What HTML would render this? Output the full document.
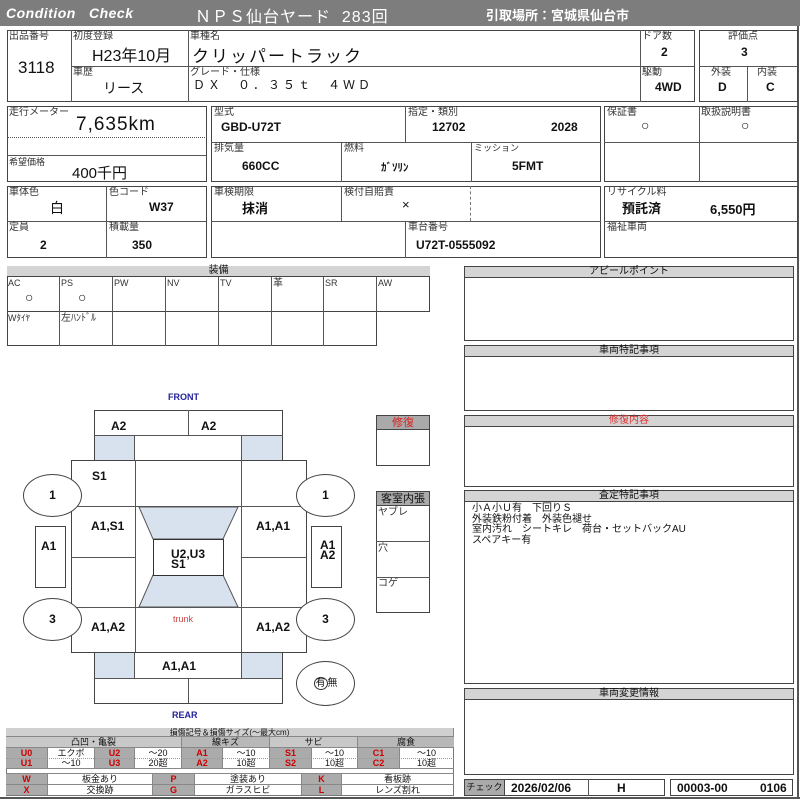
<!DOCTYPE html>
<html><head><meta charset="utf-8"><style>
*{margin:0;padding:0;box-sizing:border-box}
body{width:800px;height:800px;background:#fff;position:relative;overflow:hidden;font-family:"Liberation Sans","Noto Sans CJK JP",sans-serif;color:#111}
div{position:absolute}
.b{border:1px solid #444}
.hl{height:1px;background:#555}
.vl{width:1px;background:#555}
.lb{font-size:10px;color:#333;line-height:11px;white-space:nowrap}
.v{font-size:12px;font-weight:bold;white-space:nowrap;font-family:"Liberation Sans Narrow","Liberation Sans","Noto Sans CJK JP",sans-serif}
.c{text-align:center}
.hd{background:#d4d4d4;border-bottom:1px solid #444;text-align:center;font-size:10px;line-height:10px;height:11px}
.bl{background:#d8e2ee}
.ov{border:1px solid #444;border-radius:50%;background:#fff;text-align:center;font-size:12px;font-weight:bold}
.g{background:#ababab;color:#c00;font-weight:bold;text-align:center}
.lg div{font-size:9px;line-height:10px;text-align:center;border-right:1px solid #888}
</style></head><body>
<!-- header -->
<div style="left:0;top:0;width:800px;height:26px;background:#7d7d7d"></div>
<div style="left:6px;top:5px;color:#fff;font-size:14px;font-style:italic;font-weight:bold;font-family:'Liberation Sans',sans-serif;letter-spacing:0.5px">Condition&nbsp;&nbsp; Check</div>
<div style="left:195px;top:3px;color:#fff;font-size:16px;letter-spacing:1px">ＮＰＳ仙台ヤード&nbsp; 283回</div>
<div style="left:486px;top:5px;color:#fff;font-size:13px;font-weight:bold">引取場所：宮城県仙台市</div>
<div style="left:797px;top:26px;width:2px;height:772px;background:#555"></div>
<div style="left:0;top:797px;width:800px;height:2px;background:#555"></div>

<!-- block1 -->
<div class="b" style="left:7px;top:30px;width:688px;height:72px"></div>
<div class="vl" style="left:71px;top:30px;height:72px"></div>
<div class="vl" style="left:188px;top:30px;height:72px"></div>
<div class="vl" style="left:640px;top:30px;height:72px"></div>
<div class="hl" style="left:71px;top:66px;width:624px"></div>
<div class="lb" style="left:9px;top:31px">出品番号</div>
<div style="left:18px;top:58px;font-size:17px">3118</div>
<div class="lb" style="left:73px;top:31px">初度登録</div>
<div style="left:92px;top:42px;font-size:16px">H23年10月</div>
<div class="lb" style="left:73px;top:67px">車歴</div>
<div style="left:103px;top:78px;font-size:14px">リース</div>
<div class="lb" style="left:190px;top:31px">車種名</div>
<div style="left:192px;top:42px;font-size:17px;letter-spacing:2px">クリッパートラック</div>
<div class="lb" style="left:190px;top:67px">グレード・仕様</div>
<div style="left:193px;top:76px;font-size:12px;letter-spacing:3px">ＤＸ　０．３５ｔ　４ＷＤ</div>
<div class="lb" style="left:642px;top:31px">ドア数</div>
<div class="v" style="left:661px;top:45px">2</div>
<div class="lb" style="left:642px;top:67px">駆動</div>
<div class="v" style="left:655px;top:80px">4WD</div>
<div class="b" style="left:699px;top:30px;width:99px;height:72px"></div>
<div class="hl" style="left:699px;top:66px;width:99px"></div>
<div class="vl" style="left:747px;top:66px;height:36px"></div>
<div class="lb" style="left:728px;top:31px">評価点</div>
<div class="v" style="left:741px;top:45px">3</div>
<div class="lb" style="left:711px;top:67px">外装</div>
<div class="v" style="left:718px;top:80px">D</div>
<div class="lb" style="left:757px;top:67px">内装</div>
<div class="v" style="left:766px;top:80px">C</div>

<!-- block2 -->
<div class="b" style="left:7px;top:106px;width:200px;height:76px"></div>
<div style="left:7px;top:137px;width:200px;border-top:1px dotted #555"></div>
<div class="hl" style="left:7px;top:155px;width:200px"></div>
<div class="lb" style="left:9px;top:107px">走行メーター</div>
<div style="left:76px;top:114px;font-size:19px;letter-spacing:1px">7,635km</div>
<div class="lb" style="left:9px;top:157px;font-size:9px">希望価格</div>
<div style="left:72px;top:162px;font-size:15px">400千円</div>
<div class="b" style="left:211px;top:106px;width:390px;height:76px"></div>
<div class="vl" style="left:405px;top:106px;height:36px"></div>
<div class="hl" style="left:211px;top:142px;width:390px"></div>
<div class="vl" style="left:341px;top:142px;height:40px"></div>
<div class="vl" style="left:471px;top:142px;height:40px"></div>
<div class="lb" style="left:214px;top:107px">型式</div>
<div class="v" style="left:221px;top:120px">GBD-U72T</div>
<div class="lb" style="left:408px;top:107px">指定・類別</div>
<div class="v" style="left:432px;top:120px">12702</div>
<div class="v" style="left:551px;top:120px">2028</div>
<div class="lb" style="left:214px;top:143px">排気量</div>
<div class="v" style="left:242px;top:159px">660CC</div>
<div class="lb" style="left:344px;top:143px">燃料</div>
<div class="v" style="left:381px;top:159px;font-size:11px">ｶﾞｿﾘﾝ</div>
<div class="lb" style="left:474px;top:143px;font-size:9px">ミッション</div>
<div class="v" style="left:512px;top:159px">5FMT</div>
<div class="b" style="left:604px;top:106px;width:194px;height:76px"></div>
<div class="vl" style="left:699px;top:106px;height:76px"></div>
<div class="hl" style="left:604px;top:142px;width:194px"></div>
<div class="lb" style="left:607px;top:107px">保証書</div>
<div style="left:641px;top:117px;font-size:14px">○</div>
<div class="lb" style="left:701px;top:107px">取扱説明書</div>
<div style="left:741px;top:117px;font-size:14px">○</div>

<!-- block3 -->
<div class="b" style="left:7px;top:186px;width:200px;height:72px"></div>
<div class="hl" style="left:7px;top:221px;width:200px"></div>
<div class="vl" style="left:106px;top:186px;height:72px"></div>
<div class="lb" style="left:9px;top:187px">車体色</div>
<div style="left:50px;top:198px;font-size:14px">白</div>
<div class="lb" style="left:109px;top:187px">色コード</div>
<div class="v" style="left:149px;top:200px">W37</div>
<div class="lb" style="left:9px;top:222px">定員</div>
<div class="v" style="left:40px;top:238px">2</div>
<div class="lb" style="left:109px;top:222px">積載量</div>
<div class="v" style="left:132px;top:238px">350</div>
<div class="b" style="left:211px;top:186px;width:390px;height:72px"></div>
<div class="hl" style="left:211px;top:221px;width:390px"></div>
<div class="vl" style="left:341px;top:186px;height:35px"></div>
<div style="left:470px;top:186px;height:35px;border-left:1px dashed #777"></div>
<div class="vl" style="left:405px;top:221px;height:37px"></div>
<div class="lb" style="left:214px;top:187px">車検期限</div>
<div style="left:242px;top:198px;font-size:13px;font-weight:bold">抹消</div>
<div class="lb" style="left:344px;top:187px">検付自賠責</div>
<div style="left:402px;top:197px;font-size:13px">×</div>
<div class="lb" style="left:408px;top:222px">車台番号</div>
<div class="v" style="left:416px;top:238px">U72T-0555092</div>
<div class="b" style="left:604px;top:186px;width:194px;height:72px"></div>
<div class="hl" style="left:604px;top:221px;width:194px"></div>
<div class="lb" style="left:607px;top:187px">リサイクル料</div>
<div style="left:622px;top:198px;font-size:13px;font-weight:bold">預託済</div>
<div class="v" style="left:710px;top:199px;font-size:13px">6,550円</div>
<div class="lb" style="left:607px;top:222px">福祉車両</div>

<!-- 装備 -->
<div class="b" style="left:7px;top:266px;width:423px;height:46px"></div>
<div class="hd" style="left:7px;top:266px;width:423px">装備</div>
<div class="b" style="left:7px;top:311px;width:370px;height:35px"></div>
<div class="vl" style="left:59px;top:277px;height:69px"></div>
<div class="vl" style="left:112px;top:277px;height:69px"></div>
<div class="vl" style="left:165px;top:277px;height:69px"></div>
<div class="vl" style="left:218px;top:277px;height:69px"></div>
<div class="vl" style="left:271px;top:277px;height:69px"></div>
<div class="vl" style="left:323px;top:277px;height:69px"></div>
<div class="vl" style="left:376px;top:277px;height:35px"></div>
<div class="lb" style="left:8px;top:278px;font-size:9px">AC</div>
<div class="lb" style="left:61px;top:278px;font-size:9px">PS</div>
<div class="lb" style="left:114px;top:278px;font-size:9px">PW</div>
<div class="lb" style="left:167px;top:278px;font-size:9px">NV</div>
<div class="lb" style="left:220px;top:278px;font-size:9px">TV</div>
<div class="lb" style="left:273px;top:278px;font-size:10px">革</div>
<div class="lb" style="left:325px;top:278px;font-size:9px">SR</div>
<div class="lb" style="left:378px;top:278px;font-size:9px">AW</div>
<div style="left:25px;top:289px;font-size:14px">○</div>
<div style="left:78px;top:289px;font-size:14px">○</div>
<div class="lb" style="left:8px;top:313px;font-size:9px">Wﾀｲﾔ</div>
<div class="lb" style="left:61px;top:313px;font-size:10px">左ﾊﾝﾄﾞﾙ</div>

<!-- car diagram -->
<div style="left:168px;top:392px;font-size:9px;font-weight:bold;color:#22229a">FRONT</div>
<div style="left:172px;top:710px;font-size:9px;font-weight:bold;color:#22229a">REAR</div>
<div class="b" style="left:94px;top:410px;width:189px;height:51px"></div>
<div class="hl" style="left:94px;top:435px;width:189px"></div>
<div class="vl" style="left:188px;top:410px;height:25px"></div>
<div class="bl" style="left:95px;top:436px;width:40px;height:24px;border-right:1px solid #555"></div>
<div class="bl" style="left:241px;top:436px;width:41px;height:24px;border-left:1px solid #555"></div>
<div class="v" style="left:111px;top:419px">A2</div>
<div class="v" style="left:201px;top:419px">A2</div>
<div class="b" style="left:71px;top:460px;width:236px;height:193px;background:#fff"></div>
<div class="vl" style="left:135px;top:460px;height:193px"></div>
<div class="vl" style="left:241px;top:460px;height:193px"></div>
<div class="hl" style="left:71px;top:506px;width:236px"></div>
<div class="hl" style="left:71px;top:557px;width:65px"></div>
<div class="hl" style="left:241px;top:557px;width:66px"></div>
<div class="hl" style="left:71px;top:607px;width:236px"></div>
<svg style="position:absolute;left:0;top:0" width="800" height="800">
<polygon points="139,507 238,507 223,539 153,539" fill="#d8e2ee" stroke="#555"/>
<polygon points="153,575 223,575 238,607 139,607" fill="#d8e2ee" stroke="#555"/>
<rect x="153.5" y="539.5" width="70" height="36" fill="#fff" stroke="#333"/>
</svg>
<div class="v" style="left:92px;top:469px">S1</div>
<div class="v" style="left:91px;top:519px">A1,S1</div>
<div class="v" style="left:256px;top:519px">A1,A1</div>
<div class="v" style="left:171px;top:549px;line-height:10px">U2,U3<br>S1</div>
<div style="left:173px;top:614px;font-size:9px;color:#c44">trunk</div>
<div class="v" style="left:91px;top:620px">A1,A2</div>
<div class="v" style="left:256px;top:620px">A1,A2</div>
<div class="b" style="left:94px;top:652px;width:189px;height:52px"></div>
<div class="bl" style="left:95px;top:653px;width:40px;height:25px;border-right:1px solid #555"></div>
<div class="bl" style="left:241px;top:653px;width:41px;height:25px;border-left:1px solid #555"></div>
<div class="hl" style="left:94px;top:678px;width:189px"></div>
<div class="vl" style="left:188px;top:678px;height:25px"></div>
<div class="v" style="left:162px;top:659px">A1,A1</div>
<div class="ov" style="left:23px;top:474px;width:59px;height:43px;line-height:41px">1</div>
<div class="ov" style="left:296px;top:474px;width:59px;height:43px;line-height:41px">1</div>
<div class="ov" style="left:23px;top:598px;width:59px;height:43px;line-height:41px">3</div>
<div class="ov" style="left:296px;top:598px;width:59px;height:43px;line-height:41px">3</div>
<div class="ov" style="left:296px;top:661px;width:59px;height:45px;line-height:43px;font-weight:normal;font-size:10px"><span style="border:1px solid #333;border-radius:50%;padding:0 1px">有</span>無</div>
<div class="b" style="left:35px;top:526px;width:31px;height:62px"></div>
<div class="v" style="left:41px;top:539px">A1</div>
<div class="b" style="left:311px;top:526px;width:31px;height:62px"></div>
<div class="v" style="left:320px;top:540px;line-height:10px">A1<br>A2</div>

<div class="b" style="left:376px;top:415px;width:54px;height:51px"></div>
<div style="left:377px;top:416px;width:52px;height:14px;background:#aaa;border-bottom:1px solid #444;text-align:center;font-size:11px;color:#d22;line-height:14px">修復</div>
<div class="b" style="left:376px;top:491px;width:54px;height:122px"></div>
<div style="left:377px;top:492px;width:52px;height:14px;background:#aaa;border-bottom:1px solid #444;text-align:center;font-size:11px;line-height:14px">客室内張</div>
<div class="hl" style="left:376px;top:541px;width:54px"></div>
<div class="hl" style="left:376px;top:577px;width:54px"></div>
<div class="lb" style="left:378px;top:507px;font-size:10px">ヤブレ</div>
<div class="lb" style="left:378px;top:543px;font-size:10px">穴</div>
<div class="lb" style="left:378px;top:578px;font-size:10px">コゲ</div>

<!-- right panels -->
<div class="b" style="left:464px;top:266px;width:330px;height:75px"></div>
<div class="hd" style="left:465px;top:267px;width:328px">アピールポイント</div>
<div class="b" style="left:464px;top:345px;width:330px;height:66px"></div>
<div class="hd" style="left:465px;top:346px;width:328px">車両特記事項</div>
<div class="b" style="left:464px;top:415px;width:330px;height:72px"></div>
<div class="hd" style="left:465px;top:416px;width:328px;color:#d33">修復内容</div>
<div class="b" style="left:464px;top:490px;width:330px;height:194px"></div>
<div class="hd" style="left:465px;top:491px;width:328px">査定特記事項</div>
<div style="left:472px;top:504px;font-size:10px;line-height:10.5px">小Ａ小Ｕ有　下回りＳ<br>外装鉄粉付着　外装色褪せ<br>室内汚れ　シートキレ　荷台・セットバックAU<br>スペアキー有</div>
<div class="b" style="left:464px;top:688px;width:330px;height:87px"></div>
<div class="hd" style="left:465px;top:689px;width:328px">車両変更情報</div>
<div class="b" style="left:464px;top:779px;width:201px;height:17px"></div>
<div style="left:465px;top:780px;width:40px;height:15px;background:#aaa;border-right:1px solid #444;font-size:9px;line-height:15px;text-align:center;white-space:nowrap;overflow:hidden">チェック</div>
<div class="vl" style="left:588px;top:779px;height:17px"></div>
<div class="v" style="left:511px;top:781px">2026/02/06</div>
<div class="v" style="left:617px;top:781px">H</div>
<div class="b" style="left:670px;top:779px;width:123px;height:17px"></div>
<div class="v" style="left:677px;top:781px">00003-00</div>
<div class="v" style="left:760px;top:781px">0106</div>

<!-- legend -->
<div class="lg">
<div class="b" style="left:6px;top:728px;width:448px;height:68px;border-color:#777"></div>
<div style="left:6px;top:728px;width:448px;height:9px;background:#d0d0d0;border-bottom:1px solid #888;line-height:9px;font-size:8px">損傷記号＆損傷サイズ(～最大cm)</div>
<div style="left:6px;top:737px;width:176px;height:11px;background:#c8c8c8;border-bottom:1px solid #888">凸凹・亀裂</div>
<div style="left:182px;top:737px;width:88px;height:11px;background:#b8b8b8;border-bottom:1px solid #888">線キズ</div>
<div style="left:270px;top:737px;width:88px;height:11px;background:#c8c8c8;border-bottom:1px solid #888">サビ</div>
<div style="left:358px;top:737px;width:96px;height:11px;background:#b8b8b8;border-bottom:1px solid #888;border-right:none">腐食</div>
<div class="g" style="left:6px;top:748px;width:42px;height:10px">U0</div>
<div style="left:48px;top:748px;width:47px;height:10px">エクボ</div>
<div class="g" style="left:95px;top:748px;width:40px;height:10px">U2</div>
<div style="left:135px;top:748px;width:47px;height:10px">～20</div>
<div class="g" style="left:182px;top:748px;width:41px;height:10px">A1</div>
<div style="left:223px;top:748px;width:47px;height:10px">～10</div>
<div class="g" style="left:270px;top:748px;width:42px;height:10px">S1</div>
<div style="left:312px;top:748px;width:46px;height:10px">～10</div>
<div class="g" style="left:358px;top:748px;width:42px;height:10px">C1</div>
<div style="left:400px;top:748px;width:53px;height:10px;border:none">～10</div>
<div class="g" style="left:6px;top:758px;width:42px;height:10px">U1</div>
<div style="left:48px;top:758px;width:47px;height:10px">～10</div>
<div class="g" style="left:95px;top:758px;width:40px;height:10px">U3</div>
<div style="left:135px;top:758px;width:47px;height:10px">20超</div>
<div class="g" style="left:182px;top:758px;width:41px;height:10px">A2</div>
<div style="left:223px;top:758px;width:47px;height:10px">10超</div>
<div class="g" style="left:270px;top:758px;width:42px;height:10px">S2</div>
<div style="left:312px;top:758px;width:46px;height:10px">10超</div>
<div class="g" style="left:358px;top:758px;width:42px;height:10px">C2</div>
<div style="left:400px;top:758px;width:53px;height:10px;border:none">10超</div>
<div style="left:6px;top:758px;width:448px;height:0;border-top:1px dotted #999"></div>
<div style="left:6px;top:768px;width:448px;height:0;border-top:1px solid #888"></div>
<div style="left:6px;top:773px;width:448px;height:0;border-top:1px solid #888"></div>
<div class="g" style="left:6px;top:774px;width:42px;height:10px">W</div>
<div style="left:48px;top:774px;width:105px;height:10px">板金あり</div>
<div class="g" style="left:153px;top:774px;width:42px;height:10px">P</div>
<div style="left:195px;top:774px;width:107px;height:10px">塗装あり</div>
<div class="g" style="left:302px;top:774px;width:40px;height:10px">K</div>
<div style="left:342px;top:774px;width:111px;height:10px;border:none">看板跡</div>
<div style="left:6px;top:784px;width:448px;height:0;border-top:1px solid #888"></div>
<div class="g" style="left:6px;top:785px;width:42px;height:10px">X</div>
<div style="left:48px;top:785px;width:105px;height:10px">交換跡</div>
<div class="g" style="left:153px;top:785px;width:42px;height:10px">G</div>
<div style="left:195px;top:785px;width:107px;height:10px">ガラスヒビ</div>
<div class="g" style="left:302px;top:785px;width:40px;height:10px">L</div>
<div style="left:342px;top:785px;width:111px;height:10px;border:none">レンズ割れ</div>
</div>
</body></html>
